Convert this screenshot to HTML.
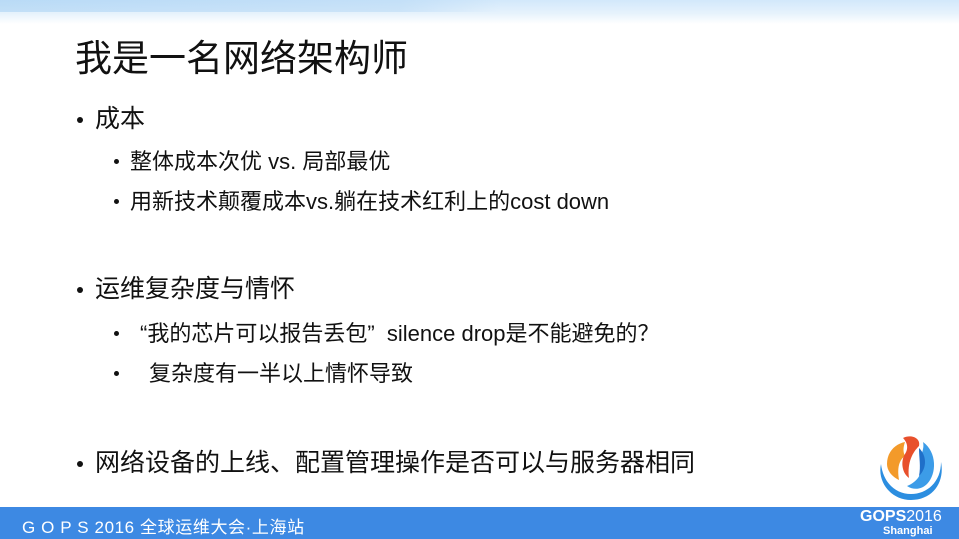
<!DOCTYPE html>
<html><head><meta charset="utf-8"><style>
*{margin:0;padding:0;box-sizing:border-box}
body{width:959px;height:539px;overflow:hidden;background:#fff;position:relative;font-family:"Liberation Sans","Noto Sans CJK SC",sans-serif;color:#111}
.top{position:absolute;left:0;top:0;width:959px;height:24px;background:linear-gradient(180deg,#d2e8fb 0%,#e6f2fc 55%,#fff 100%)}
.top:before{content:"";position:absolute;left:0;top:0;width:500px;height:12px;background:linear-gradient(90deg,rgba(160,205,242,.5),rgba(180,215,245,.5) 80%,rgba(200,225,248,0))}
.t{position:absolute;white-space:nowrap}
.h{left:75px;top:28px;font-size:37px}
.l1{font-size:25px}
.l2{font-size:22px}
.b{position:absolute;width:5px;height:5px;border-radius:50%;background:#111}
.foot{position:absolute;left:0;top:507px;width:959px;height:32px;background:#3d89e3;color:#fff}
</style></head><body>
<div class="top"></div>
<div class="t h">我是一名网络架构师</div>
<div class="b" style="left:77px;top:117px;width:6px;height:6px"></div>
<div class="t l1" style="left:95px;top:99px">成本</div>
<div class="b" style="left:114px;top:159px"></div>
<div class="t l2" style="left:130px;top:144px">整体成本次优 vs. 局部最优</div>
<div class="b" style="left:114px;top:199px"></div>
<div class="t l2" style="left:130px;top:184px">用新技术颠覆成本vs.躺在技术红利上的cost down</div>
<div class="b" style="left:77px;top:287px;width:6px;height:6px"></div>
<div class="t l1" style="left:95px;top:269px">运维复杂度与情怀</div>
<div class="b" style="left:114px;top:331px"></div>
<div class="t l2" style="left:140px;top:316px">“我的芯片可以报告丢包”&nbsp;&nbsp;silence drop是不能避免的？</div>
<div class="b" style="left:114px;top:371px"></div>
<div class="t l2" style="left:149px;top:356px">复杂度有一半以上情怀导致</div>
<div class="b" style="left:77px;top:461px;width:6px;height:6px"></div>
<div class="t l1" style="left:95px;top:443px">网络设备的上线、配置管理操作是否可以与服务器相同</div>
<svg style="position:absolute;left:875px;top:434px" width="72" height="70" viewBox="0 0 72 70">
<path d="M6 30 C2 48 16 66 36 66 C58 66 70 48 66 28 C66 48 52 60 36 60 C20 60 8 48 6 30Z" fill="#2c8ee0"/>
<path d="M12 30 C12 18 20 10 30 8 C28 14 28 18 30 22 C24 26 22 34 24 46 C16 42 12 36 12 30Z" fill="#f39a2a"/>
<path d="M28 4 C36 0 46 4 44 12 C38 18 32 28 34 44 C26 38 26 26 30 20 C34 14 32 8 28 4Z" fill="#e8502c"/>
<path d="M48 8 C62 18 62 40 52 50 C46 56 38 56 32 52 C42 48 48 40 46 30 C44 22 50 16 48 8Z" fill="#3c9ce8"/>
<path d="M44 14 C52 22 52 34 44 42 C46 32 44 24 44 14Z" fill="#1f6fc9"/>
</svg>
<div class="foot">
<div class="t" style="left:22px;top:6px;font-size:17px;letter-spacing:.6px">G O P S 2016 全球运维大会·上海站</div>
<div class="t" style="left:860px;top:1px;font-size:16px;font-weight:bold">GOPS<span style="font-weight:normal">2016</span></div>
<div class="t" style="left:883px;top:18px;font-size:11px;font-weight:bold">Shanghai</div>
</div>
</body></html>
